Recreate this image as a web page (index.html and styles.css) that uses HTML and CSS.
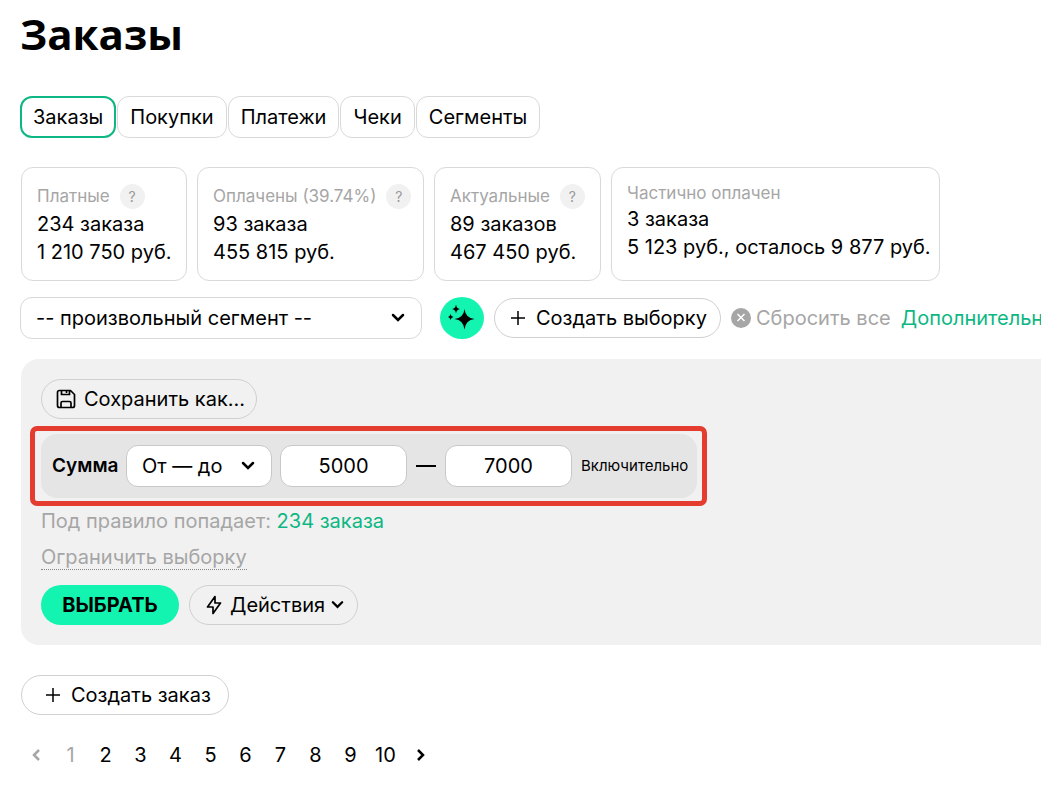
FILE: index.html
```
<!DOCTYPE html>
<html lang="ru">
<head>
<meta charset="utf-8">
<meta name="viewport" content="width=device-width, initial-scale=1">
<title>Заказы</title>
<link rel="stylesheet" href="styles.css">
</head>
<body>
<main class="page">
  <h1 class="title">Заказы</h1>

  <nav class="tabs">
    <a class="tab tab-active" href="#">Заказы</a>
    <a class="tab" href="#">Покупки</a>
    <a class="tab" href="#">Платежи</a>
    <a class="tab" href="#">Чеки</a>
    <a class="tab" href="#">Сегменты</a>
  </nav>

  <section class="stats">
    <div class="card card-paid">
      <div class="card-label">Платные <button class="help" type="button">?</button></div>
      <div>234 заказа</div>
      <div>1 210 750 руб.</div>
    </div>
    <div class="card card-settled">
      <div class="card-label">Оплачены (39.74%) <button class="help" type="button">?</button></div>
      <div>93 заказа</div>
      <div>455 815 руб.</div>
    </div>
    <div class="card card-actual">
      <div class="card-label">Актуальные <button class="help" type="button">?</button></div>
      <div>89 заказов</div>
      <div>467 450 руб.</div>
    </div>
    <div class="card card-partial">
      <div class="card-label card-label-plain">Частично оплачен</div>
      <div>3 заказа</div>
      <div>5 123 руб., осталось 9 877 руб.</div>
    </div>
  </section>

  <section class="filter-bar">
    <div class="select select-segment">
      <select aria-label="Сегмент"><option>-- произвольный сегмент --</option></select>
      <svg class="chevron" viewBox="0 0 14 10" aria-hidden="true"><path d="M2 2l5 5 5-5"/></svg>
    </div>
    <button class="magic" type="button" aria-label="Подобрать">
      <svg viewBox="0 0 28 28" aria-hidden="true">
        <path d="M16.500 5Q17.500 14 26.500 15Q17.500 16 16.500 25.500Q15.500 16 6.500 15Q15.500 14 16.500 5Z"/>
        <path d="M8 0.500Q8.500 4.500 12 5Q8.500 5.500 8 9.500Q7.500 5.500 4 5Q7.500 4.500 8 0.500Z"/>
        <path d="M2.500 10Q3 12.500 5.500 13Q3 13.500 2.500 16Q2 13.500 0 13Q2 12.500 2.500 10Z"/>
      </svg>
    </button>
    <button class="pill pill-sample" type="button">
      <svg class="plus" viewBox="0 0 16 16" aria-hidden="true"><path d="M8 1v14M1 8h14"/></svg>
      Создать выборку
    </button>
    <button class="reset" type="button">
      <svg viewBox="0 0 20 20" aria-hidden="true"><circle cx="10" cy="10" r="10" stroke="none"/><path d="M6.500 6l7 7M13.500 6l-7 7"/></svg>
      Сбросить все
    </button>
    <a class="more" href="#">Дополнительно</a>
  </section>

  <section class="panel">
    <button class="pill pill-save" type="button">
      <svg class="disk" viewBox="0 0 20 20" aria-hidden="true"><path d="M3.500 1.500h11l4 4v11q0 2-2 2h-13q-2 0-2-2v-13q0-2 2-2ZM5.500 1.500v4h8v-4M10.500 2v2M5 18.500v-4.500q0-1.500 1.500-1.500h7q1.500 0 1.500 1.500v4.500"/></svg>
      Сохранить как...
    </button>

    <div class="rule">
      <div class="rule-body">
        <span class="rule-name">Сумма</span>
        <div class="select select-mode">
          <select aria-label="Условие"><option>От — до</option></select>
          <svg class="chevron" viewBox="0 0 14 10" aria-hidden="true"><path d="M2 2l5 5 5-5"/></svg>
        </div>
        <input class="amount" type="text" value="5000" aria-label="Сумма от">
        <span class="dash"></span>
        <input class="amount" type="text" value="7000" aria-label="Сумма до">
        <span class="inclusive">Включительно</span>
      </div>
    </div>

    <p class="matches">Под правило попадает: <a href="#">234 заказа</a></p>
    <a class="limit" href="#">Ограничить выборку</a>

    <div class="actions">
      <button class="choose" type="button">ВЫБРАТЬ</button>
      <button class="pill pill-actions" type="button">
        <svg class="bolt" viewBox="0 0 16 20" aria-hidden="true"><path d="M9 1.500L1.500 12h5.500v6.500L14.500 8h-5.500z"/></svg>
        Действия
        <svg class="caret" viewBox="0 0 14 10" aria-hidden="true"><path d="M2 2l5 5 5-5"/></svg>
      </button>
    </div>
  </section>

  <button class="pill pill-order" type="button">
    <svg class="plus" viewBox="0 0 16 16" aria-hidden="true"><path d="M8 1v14M1 8h14"/></svg>
    Создать заказ
  </button>

  <nav class="pages" aria-label="Страницы">
    <a class="page-off" href="#" aria-label="Назад"><svg viewBox="0 0 10 14" aria-hidden="true"><path d="M8 2L3 7l5 5"/></svg></a>
    <a class="page-off" href="#">1</a>
    <a href="#">2</a>
    <a href="#">3</a>
    <a href="#">4</a>
    <a href="#">5</a>
    <a href="#">6</a>
    <a href="#">7</a>
    <a href="#">8</a>
    <a href="#">9</a>
    <a href="#">10</a>
    <a href="#" aria-label="Вперёд"><svg viewBox="0 0 10 14" aria-hidden="true"><path d="M2 2l5 5-5 5"/></svg></a>
  </nav>
</main>
</body>
</html>
```

FILE: styles.css
```
* { box-sizing: border-box; }

body {
  margin: 0;
  background: #fff;
  color: #000;
  font: 20px/28px Inter, "Open Sans", sans-serif;
}

button, input, select { font: inherit; color: inherit; }
button { cursor: pointer; }
a { color: inherit; text-decoration: none; }
svg { fill: none; stroke: currentColor; flex: none; }

.page {
  padding: 6px 0 16px 20px;
  overflow: hidden;
}

.title {
  margin: 0 0 34px;
  font: 700 42px/56px "Open Sans", sans-serif;
}

.tabs { display: flex; gap: 1px; }

.tab {
  padding: 6px 12px;
  border: 1px solid #d9d9d9;
  border-radius: 12px;
}

.tab-active {
  padding: 5px 11px;
  border: 2px solid #0db783;
}

.stats {
  display: flex;
  gap: 10px;
  margin: 29px 0 16px 1px;
}

.card {
  padding: 14px 15px;
  border: 1px solid #d9d9d9;
  border-radius: 12px;
  white-space: nowrap;
}

.card-paid { width: 166px; }
.card-settled { width: 227px; }
.card-actual { width: 167px; }
.card-partial { width: 329px; }

.card-label {
  display: flex;
  align-items: center;
  gap: 10px;
  color: #a6a6a6;
  font-size: 17px;
}

.card-label-plain { line-height: 23px; }

.help {
  width: 25px;
  height: 25px;
  padding: 0;
  border: 0;
  border-radius: 50%;
  background: #f1f1f1;
  color: #999;
  font-size: 14px;
  line-height: 25px;
  flex: none;
}

.filter-bar {
  display: flex;
  align-items: center;
  gap: 10px;
  white-space: nowrap;
}

.select { display: grid; align-items: center; flex: none; }
.select > * { grid-area: 1 / 1; }

.select select {
  appearance: none;
  width: 100%;
  height: 42px;
  padding: 0 15px;
  border: 1px solid #d9d9d9;
  border-radius: 12px;
  background: #fff;
}

.chevron {
  width: 14px;
  height: 10px;
  justify-self: end;
  margin-right: 17px;
  stroke-width: 2.5;
  stroke-linecap: round;
  pointer-events: none;
}

.select-segment { width: 402px; }

.magic {
  display: grid;
  place-items: center;
  flex: none;
  width: 44px;
  height: 42px;
  margin-left: 8px;
  padding: 0;
  border: 0;
  border-radius: 50%;
  background: #13f4b1;
}

.magic svg { width: 28px; height: 28px; fill: #000; stroke: none; }

.pill {
  display: inline-flex;
  align-items: center;
  flex: none;
  gap: 8px;
  height: 40px;
  padding: 0 14px;
  border: 1px solid #d0d0d0;
  border-radius: 20px;
  background: transparent;
  white-space: nowrap;
}

.plus { width: 16px; height: 16px; stroke-width: 1.5; }
.pill-sample { width: 227px; padding: 0 15px; gap: 10px; }

.reset {
  display: flex;
  align-items: center;
  flex: none;
  gap: 5px;
  padding: 0;
  border: 0;
  background: none;
  color: #a6a6a6;
}

.reset svg { width: 20px; height: 20px; fill: #a6a6a6; stroke: #fff; stroke-width: 1.5; }

.more { color: #0db783; }

.panel {
  display: flex;
  flex-direction: column;
  align-items: flex-start;
  margin: 20px 0 30px 1px;
  padding: 20px;
  border-radius: 18px 0 0 18px;
  background: #f1f1f1;
}

.disk { width: 20px; height: 20px; stroke-width: 1.7; }
.pill-save { padding-right: 11px; }

.rule {
  margin: 7px 0 0 -11px;
  padding: 3px 5px 3px 6px;
  border: 5px solid #e43d30;
  border-radius: 7px;
}

.rule-body {
  display: flex;
  align-items: center;
  width: 656px;
  height: 64px;
  padding: 0 11px;
  border-radius: 16px;
  background: #e5e5e5;
}

.rule-name { flex: none; width: 74px; font-size: 19px; font-weight: 600; }

.select-mode { width: 146px; margin-right: 8px; }
.select-mode select { border-color: #c8c8c8; }

.amount {
  flex: none;
  width: 127px;
  height: 42px;
  padding: 0;
  border: 1px solid #c8c8c8;
  border-radius: 12px;
  background: #fff;
  text-align: center;
}

.dash { flex: none; width: 20px; height: 2px; margin: 0 9px; background: #000; }

.inclusive { margin-left: 9px; font-size: 15px; }

.matches { margin: 1px 0 10px; color: #a6a6a6; }
.matches a { color: #0db783; }

.limit {
  color: #a6a6a6;
  line-height: 24px;
  border-bottom: 1px dotted #888;
}

.actions { display: flex; gap: 10px; margin-top: 15px; }

.choose {
  width: 138px;
  height: 40px;
  padding: 0;
  border: 0;
  border-radius: 20px;
  background: #13f4b1;
  font-weight: 700;
}

.pill-actions { width: 169px; gap: 6px; }
.bolt { width: 20px; height: 20px; stroke-width: 1.7; stroke-linejoin: round; }
.caret { width: 13px; height: 10px; stroke-width: 2.5; stroke-linecap: round; }

.pill-order { width: 208px; margin-left: 1px; padding: 0 23px; gap: 10px; }

.pages { display: flex; margin: 26px 0 0 -2px; }

.pages a {
  display: flex;
  align-items: center;
  justify-content: center;
  width: 35px;
  height: 28px;
}

.pages svg { width: 10px; height: 14px; stroke-width: 2.5; }
.pages .page-off { color: #a6a6a6; }
```
